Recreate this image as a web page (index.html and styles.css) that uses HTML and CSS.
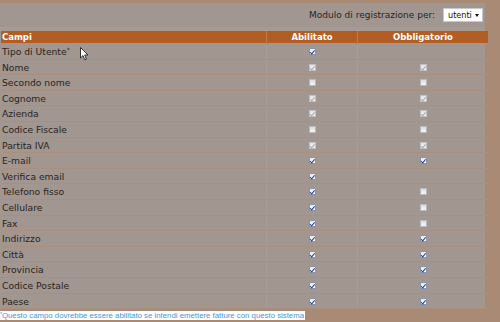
FILE: index.html
```html
<!DOCTYPE html>
<html>
<head>
<meta charset="utf-8">
<link rel="stylesheet" href="styles.css">
</head>
<body>
<div class="page">
  <div class="panel">
    <div class="topbar">
      <span class="toplabel">Modulo di registrazione per:</span>
      <div class="select"><span>utenti</span><span class="arrow"></span></div>
    </div>
    <div class="strip"></div>
    <table class="grid">
      <thead>
        <tr><th class="c1">Campi</th><th class="c2">Abilitato</th><th class="c3">Obbligatorio</th></tr>
      </thead>
      <tbody>
        <tr><td>Tipo di Utente<sup>*</sup></td><td class="ck"><i class="cb on"></i></td><td class="ck"></td></tr>
        <tr><td>Nome</td><td class="ck"><i class="cb dis"></i></td><td class="ck"><i class="cb dis"></i></td></tr>
        <tr><td>Secondo nome</td><td class="ck"><i class="cb off"></i></td><td class="ck"><i class="cb off"></i></td></tr>
        <tr><td>Cognome</td><td class="ck"><i class="cb dis"></i></td><td class="ck"><i class="cb dis"></i></td></tr>
        <tr><td>Azienda</td><td class="ck"><i class="cb dis"></i></td><td class="ck"><i class="cb dis"></i></td></tr>
        <tr><td>Codice Fiscale</td><td class="ck"><i class="cb off"></i></td><td class="ck"><i class="cb off"></i></td></tr>
        <tr><td>Partita IVA</td><td class="ck"><i class="cb dis"></i></td><td class="ck"><i class="cb dis"></i></td></tr>
        <tr><td>E-mail</td><td class="ck"><i class="cb on"></i></td><td class="ck"><i class="cb on"></i></td></tr>
        <tr><td>Verifica email</td><td class="ck"><i class="cb on"></i></td><td class="ck"></td></tr>
        <tr><td>Telefono fisso</td><td class="ck"><i class="cb on"></i></td><td class="ck"><i class="cb off"></i></td></tr>
        <tr><td>Cellulare</td><td class="ck"><i class="cb on"></i></td><td class="ck"><i class="cb off"></i></td></tr>
        <tr><td>Fax</td><td class="ck"><i class="cb on"></i></td><td class="ck"><i class="cb off"></i></td></tr>
        <tr><td>Indirizzo</td><td class="ck"><i class="cb on"></i></td><td class="ck"><i class="cb on"></i></td></tr>
        <tr><td>Città</td><td class="ck"><i class="cb on"></i></td><td class="ck"><i class="cb on"></i></td></tr>
        <tr><td>Provincia</td><td class="ck"><i class="cb on"></i></td><td class="ck"><i class="cb on"></i></td></tr>
        <tr><td>Codice Postale</td><td class="ck"><i class="cb on"></i></td><td class="ck"><i class="cb on"></i></td></tr>
        <tr><td>Paese</td><td class="ck"><i class="cb on"></i></td><td class="ck"><i class="cb on"></i></td></tr>
      </tbody>
    </table>
  </div>
  <div class="note"><span><sup>*</sup>Questo campo dovrebbe essere abilitato se intendi emettere fatture con questo sistema</span></div>
  <svg class="cursor" width="10" height="14" viewBox="0 0 10 14"><path d="M0.5 0.5 L0.5 11 L3 8.6 L4.8 12.8 L6.4 12.1 L4.7 8 L8 8 Z" fill="#fff" stroke="#222" stroke-width="0.9"/></svg>
</div>
</body>
</html>
```
FILE: styles.css
```css
html, body {
  margin: 0;
  padding: 0;
}
body {
  background: #a88a75;
  font-family: "DejaVu Sans", Verdana, sans-serif;
  font-size: 9px;
  color: #2a2420;
}
.page {
  position: relative;
  width: 500px;
  height: 322px;
  padding-top: 3px;
  box-sizing: border-box;
}
.panel {
  width: 485px;
  background: #a29690;
}
.topbar {
  height: 24px;
  display: flex;
  align-items: center;
  justify-content: flex-end;
  padding-right: 2px;
  box-sizing: border-box;
}
.toplabel {
  font-size: 9px;
  color: #2a2420;
  margin-right: 8px;
}
.select {
  width: 40px;
  height: 14px;
  background: #fff;
  border: 1px solid #c8c8c8;
  box-sizing: border-box;
  display: flex;
  align-items: center;
  justify-content: space-between;
  padding: 0 3px 0 4px;
  font-family: "DejaVu Sans Condensed", "DejaVu Sans", sans-serif;
  font-size: 9px;
  color: #111;
}
.arrow {
  width: 0;
  height: 0;
  border-left: 2.5px solid transparent;
  border-right: 2.5px solid transparent;
  border-top: 3px solid #111;
}
.strip {
  height: 4px;
  background: #a69a94;
}
.grid {
  margin-left: 1px;
  width: 484px;
  border-collapse: collapse;
  table-layout: fixed;
}
.grid th {
  background: #b15d24;
  color: #fff;
  font-weight: bold;
  height: 12px;
  padding: 0;
  font-size: 8.5px;
  line-height: 12px;
  border-left: 1px solid #c07b4c;
}
.grid th.c1 {
  width: 264px;
  text-align: left;
  padding-left: 1px;
  border-left: none;
}
.grid th.c2 { width: 90px; }
.grid th.c3 { width: 130px; }
.grid tbody tr:first-child td { border-top: 1px solid #a2968f; }
.grid td {
  height: 13.6px;
  padding: 1px 0 0 1px;
  border-bottom: 1px solid #ab8e7c;
  border-left: 1px solid #a99c95;
  font-size: 9.2px;
  line-height: 13.6px;
  white-space: nowrap;
}
.grid td:first-child { border-left: none; }
.grid td.ck {
  text-align: center;
  padding: 1px 0 0 0;
}
sup {
  font-size: 6px;
  vertical-align: 3px;
  line-height: 0;
}
.cb {
  display: inline-block;
  width: 7px;
  height: 7px;
  box-sizing: border-box;
  vertical-align: middle;
  border: 1px solid #b8b8c0;
  background: linear-gradient(#dcdcdc, #f6f6f6);
  position: relative;
  top: -1px;
}
.cb.on {
  border-color: #8a93b0;
  background: linear-gradient(#e6e8ee, #ffffff);
}
.cb.on::after, .cb.dis::after {
  content: "";
  position: absolute;
  left: 1.5px;
  top: 0px;
  width: 1.5px;
  height: 3.5px;
  border-right: 1.5px solid #2b3e86;
  border-bottom: 1.5px solid #2b3e86;
  transform: rotate(40deg);
}
.cb.dis {
  border-color: #c0c0c4;
  background: linear-gradient(#e4e4e4, #f4f4f4);
}
.cb.dis::after {
  border-color: #a8a8b4;
}
.note {
  margin-top: 2px;
  font-family: "Liberation Sans", Arial, sans-serif;
  font-size: 7.8px;
  line-height: 10px;
}
.note span {
  background: #ffffff;
  color: #3f96e0;
  padding-right: 1px;
}
.note sup {
  font-size: 5px;
  vertical-align: 2px;
  color: #3f96e0;
}
.cursor {
  position: absolute;
  left: 80px;
  top: 47px;
}
```
